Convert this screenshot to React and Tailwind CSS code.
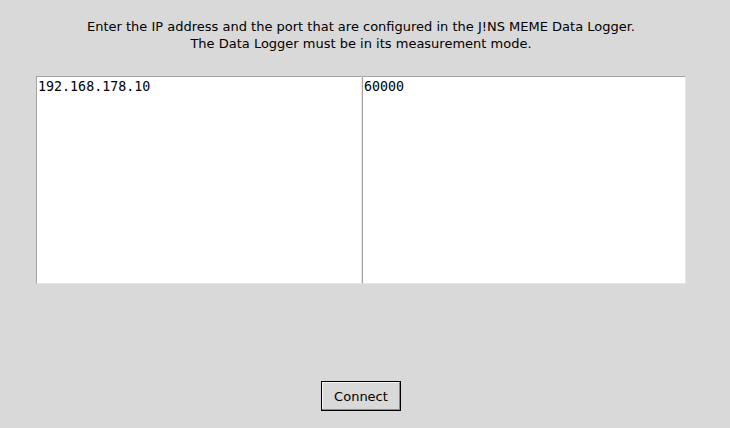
import React, { useState } from "react";

export default function App() {
  const [ip, setIp] = useState("192.168.178.10");
  const [port, setPort] = useState("60000");

  const boxCls =
    "h-[208px] resize-none border border-t-[#a3a3a3] border-l-[#a3a3a3] border-r-[#e6e6e6] border-b-[#e6e6e6] bg-white px-[1px] py-[1px] text-[13.33px] leading-[17px] text-black outline-none";

  return (
    <div
      className="h-[428px] w-[730px] bg-[#d9d9d9] pl-[36px]"
      style={{ fontFamily: '"DejaVu Sans", sans-serif' }}
    >
      <div className="flex w-[650px] flex-col items-center">
        <div className="pt-[18px] text-center text-[13px] leading-[17px] text-black">
          <div>Enter the IP address and the port that are configured in the J!NS MEME Data Logger.</div>
          <div>The Data Logger must be in its measurement mode.</div>
        </div>

        <div className="mt-[24px] flex w-[650px]">
          <textarea
            value={ip}
            onChange={(e) => setIp(e.target.value)}
            className={`${boxCls} w-[326px]`}
            style={{ fontFamily: '"DejaVu Sans Mono", monospace' }}
          />
          <textarea
            value={port}
            onChange={(e) => setPort(e.target.value)}
            className={`${boxCls} w-[324px]`}
            style={{ fontFamily: '"DejaVu Sans Mono", monospace' }}
          />
        </div>

        <button className="mt-[97px] h-[30px] w-[80px] border border-black bg-[#d9d9d9] pt-[1px] text-[13px] text-black shadow-[inset_-1px_-1px_0_#8a8a8a,inset_1px_1px_0_#f5f5f5]">
          Connect
        </button>
      </div>
    </div>
  );
}
